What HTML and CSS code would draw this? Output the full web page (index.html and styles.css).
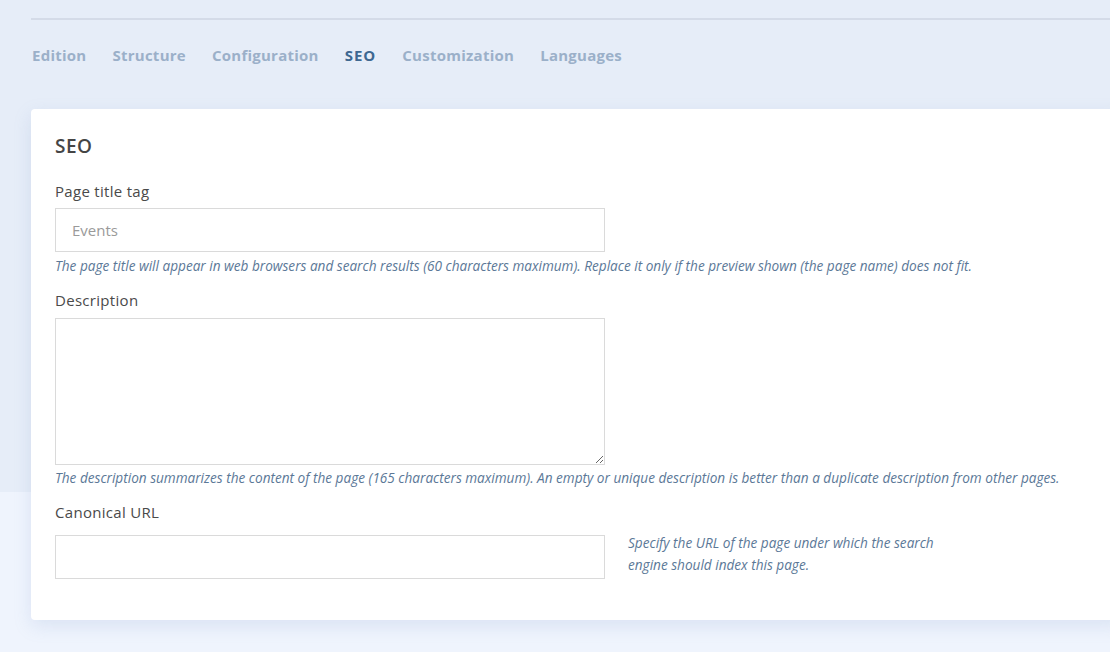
FILE: index.html
```html
<!DOCTYPE html>
<html lang="en">
<head>
<meta charset="utf-8">
<title>SEO</title>
<link rel="stylesheet" href="styles.css">
</head>
<body>
<div class="page">
  <div class="rule"></div>
  <nav class="tabs">
    <a class="tab">Edition</a>
    <a class="tab">Structure</a>
    <a class="tab">Configuration</a>
    <a class="tab active">SEO</a>
    <a class="tab">Customization</a>
    <a class="tab">Languages</a>
  </nav>
  <section class="card">
    <h2 class="card-title">SEO</h2>
    <label class="label">Page title tag</label>
    <input class="field" type="text" placeholder="Events">
    <p class="help">The page title will appear in web browsers and search results (60 characters maximum). Replace it only if the preview shown (the page name) does not fit.</p>
    <label class="label">Description</label>
    <textarea class="field area"></textarea>
    <p class="help help-tight">The description summarizes the content of the page (165 characters maximum). An empty or unique description is better than a duplicate description from other pages.</p>
    <label class="label">Canonical URL</label>
    <div class="row">
      <input class="field" type="text">
      <p class="side-help">Specify the URL of the page under which the search engine should index this page.</p>
    </div>
  </section>
</div>
</body>
</html>
```
FILE: styles.css
```css
html, body {
  margin: 0;
  padding: 0;
}
body {
  background: linear-gradient(to bottom, #e6edf8 0, #e6edf8 492px, #eff4fd 492px, #eff4fd 100%);
  min-height: 652px;
  overflow: hidden;
  font-family: "Open Sans", "Lato", sans-serif;
}
.page {
  padding-left: 31px;
  height: 652px;
}
.rule {
  margin-top: 18px;
  height: 2px;
  background: #d4dbe8;
}
.tabs {
  display: flex;
  gap: 26px;
  margin-top: 25px;
  padding-left: 1px;
}
.tab {
  font-size: 15px;
  line-height: 20px;
  font-weight: 700;
  letter-spacing: 0.25px;
  color: #9bb0c9;
}
.tab.active {
  color: #3e6891;
  letter-spacing: 1px;
}
.card {
  margin-top: 44px;
  margin-right: -12px;
  background: #fff;
  border-radius: 4px;
  box-shadow: 0 6px 18px rgba(120, 150, 200, 0.18);
  padding: 25px 24px 41px 24px;
}
.card-title {
  margin: 0;
  font-size: 19px;
  line-height: 24px;
  font-weight: 600;
  letter-spacing: 0.5px;
  color: #454545;
}
.label {
  display: block;
  margin-top: 15px;
  font-size: 15px;
  line-height: 20px;
  font-weight: 500;
  letter-spacing: 0.3px;
  color: #4a4a4a;
}
.card-title + .label {
  margin-top: 23px;
}
.field {
  display: block;
  box-sizing: border-box;
  width: 550px;
  height: 44px;
  margin: 7px 0 0 0;
  border: 1px solid #dadada;
  border-radius: 0;
  padding: 0 16px;
  font-family: inherit;
  font-size: 15px;
  color: #555;
  background: #fff;
  outline: none;
}
.field::placeholder {
  color: #9a9a9a;
}
.area {
  height: 147px;
  margin-top: 8px;
  resize: vertical;
  padding: 10px 16px;
}
.help {
  margin: 5px 0 0 0;
  font-size: 13.6px;
  line-height: 18px;
  font-style: italic;
  color: #5b7897;
}
.help-tight {
  margin-top: 4px;
}
.row {
  display: flex;
  align-items: flex-start;
  gap: 23px;
  margin-top: 13px;
}
.row .field {
  margin-top: 0;
  flex: none;
}
.side-help {
  margin: -3px 0 0 0;
  width: 320px;
  font-size: 13.6px;
  line-height: 22px;
  font-style: italic;
  color: #5b7897;
}
```
